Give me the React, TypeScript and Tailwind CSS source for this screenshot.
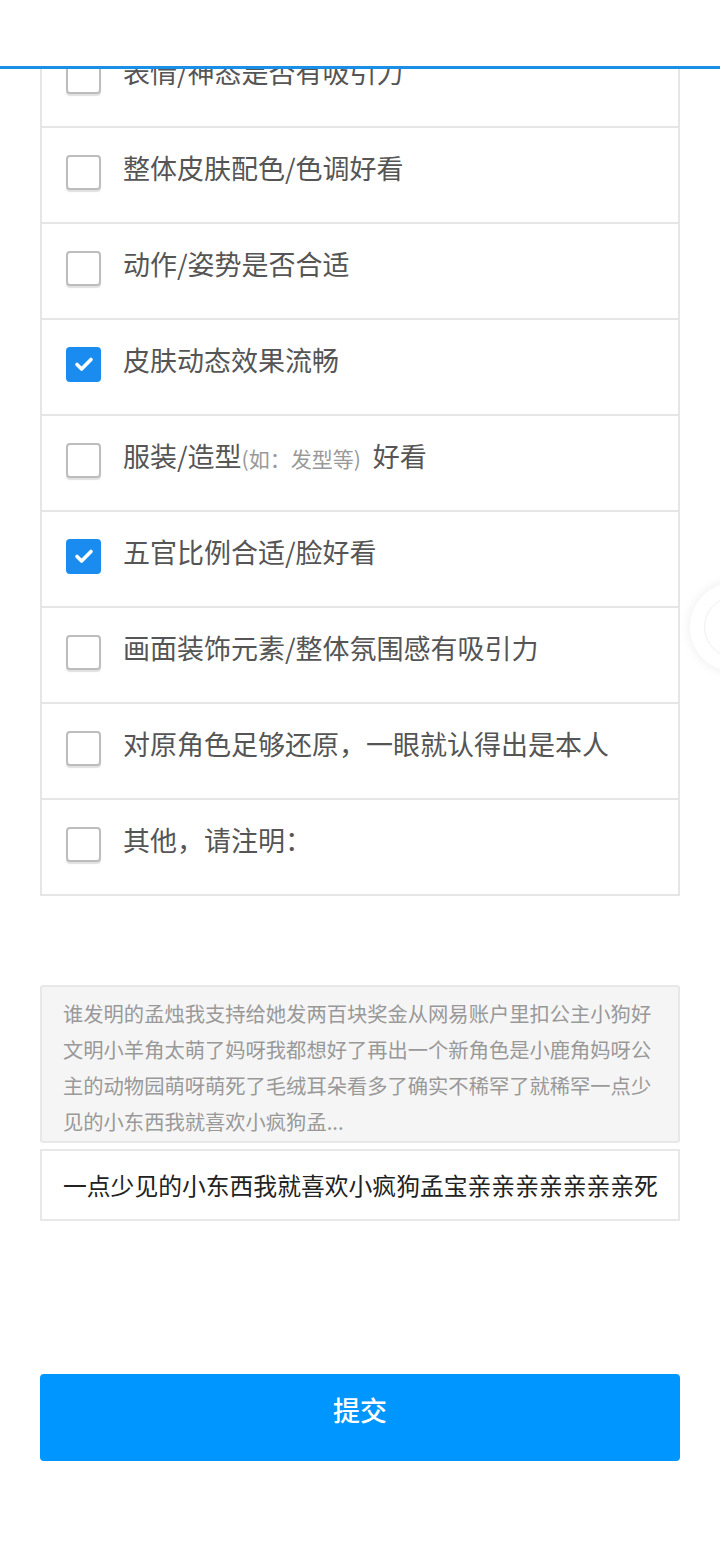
import React from "react";

const options = [
  { label: "表情/神态是否有吸引力", checked: false },
  { label: "整体皮肤配色/色调好看", checked: false },
  { label: "动作/姿势是否合适", checked: false },
  { label: "皮肤动态效果流畅", checked: true },
  { label: "服装/造型", note: "(如：发型等)", tail: "好看", checked: false },
  { label: "五官比例合适/脸好看", checked: true },
  { label: "画面装饰元素/整体氛围感有吸引力", checked: false },
  { label: "对原角色足够还原，一眼就认得出是本人", checked: false },
  { label: "其他，请注明：", checked: false },
];

const Box = ({ checked }: { checked: boolean }) =>
  checked ? (
    <span className="flex h-[35px] w-[35px] shrink-0 items-center justify-center rounded-[4px] bg-[#1a8cf0]">
      <svg width="22" height="22" viewBox="0 0 22 22" fill="none">
        <path d="M4 11.5l4.6 4.6L18 6.5" stroke="white" strokeWidth="3.6" strokeLinecap="round" strokeLinejoin="round" />
      </svg>
    </span>
  ) : (
    <span className="h-[35px] w-[35px] shrink-0 rounded-[4px] border-2 border-[#bdbdbd] bg-white shadow-[0_2px_1px_rgba(0,0,0,0.12)]" />
  );

const App = () => {
  return (
    <div
      className="relative h-[1560px] w-full overflow-hidden bg-white"
      style={{ fontFamily: '"Noto Sans CJK SC", "Noto Sans", sans-serif' }}
    >
      {/* sticky header covering the top of the list */}
      <div className="absolute inset-x-0 top-0 z-10 h-[69px] border-b-[3px] border-[#1a8fe8] bg-white" />

      {/* floating side button */}
      <div className="absolute left-[690px] top-[582px] h-[90px] w-[90px] rounded-full bg-white shadow-[0_0_12px_rgba(0,0,0,0.08)]">
        <div className="m-[14px] h-[62px] w-[62px] rounded-full border border-[#f0f0f0]" />
      </div>

      <main className="px-10 pt-[30px]">
        <ul className="border-2 border-[#e6e6e6]">
          {options.map((o, i) => (
            <li
              key={i}
              className={`flex items-center gap-[22px] pb-[6px] pl-[24px] ${
                i < options.length - 1 ? "h-[96px] border-b-2 border-[#e6e6e6]" : "h-[94px]"
              }`}
            >
              <Box checked={o.checked} />
              <span className="-mt-[9px] whitespace-nowrap text-[27px] leading-none text-[#555]">
                {o.label}
                {o.note && <span className="text-[21px] text-[#999]">{o.note}</span>}
                {o.tail && <span className="ml-[12px]">{o.tail}</span>}
              </span>
            </li>
          ))}
        </ul>

        <div className="mt-[89px] h-[158px] overflow-hidden rounded-[3px] border-2 border-[#e8e8e8] bg-[#f5f5f5] px-[21px] pt-[8px] text-[20.3px] leading-[36px] text-[#999]">
          谁发明的孟烛我支持给她发两百块奖金从网易账户里扣公主小狗好文明小羊角太萌了妈呀我都想好了再出一个新角色是小鹿角妈呀公主的动物园萌呀萌死了毛绒耳朵看多了确实不稀罕了就稀罕一点少见的小东西我就喜欢小疯狗孟...
        </div>

        <div className="mt-[6px] flex h-[72px] items-center overflow-hidden border-2 border-[#e8e8e8] px-[21px]">
          <span className="whitespace-nowrap text-[23.8px] text-[#222]">
            一点少见的小东西我就喜欢小疯狗孟宝亲亲亲亲亲亲亲死
          </span>
        </div>

        <button className="mt-[153px] flex h-[87px] w-full items-center justify-center rounded-[4px] bg-[#0096ff] pb-[14px] text-[27px] font-medium text-white">
          提交
        </button>
      </main>
    </div>
  );
};

export default App;
